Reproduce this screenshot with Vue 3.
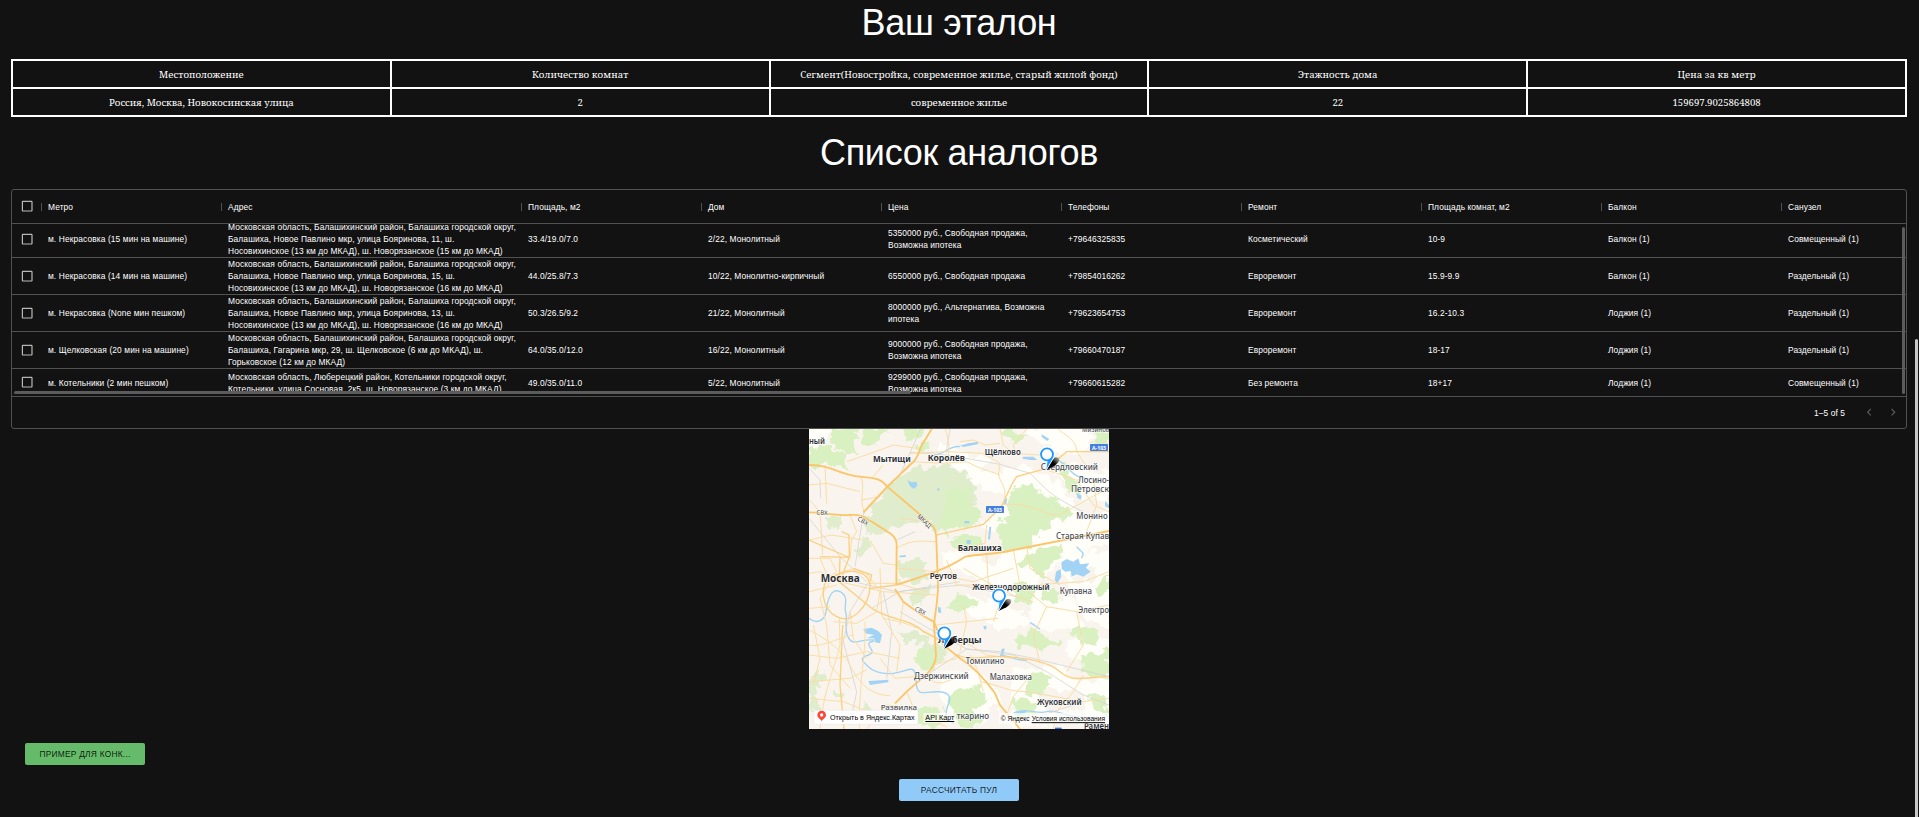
<script setup>
const etalonHead = ['Местоположение', 'Количество комнат', 'Сегмент(Новостройка, современное жилье, старый жилой фонд)', 'Этажность дома', 'Цена за кв метр']
const etalonRow = ['Россия, Москва, Новокосинская улица', '2', 'современное жилье', '22', '159697.9025864808']

const columns = ['Метро', 'Адрес', 'Площадь, м2', 'Дом', 'Цена', 'Телефоны', 'Ремонт', 'Площадь комнат, м2', 'Балкон', 'Санузел']
const rows = [
  ['м. Некрасовка (15 мин на машине)', 'Московская область, Балашихинский район, Балашиха городской округ,\nБалашиха, Новое Павлино мкр, улица Бояринова, 11, ш.\nНосовихинское (13 км до МКАД), ш. Новорязанское (15 км до МКАД)', '33.4/19.0/7.0', '2/22, Монолитный', '5350000 руб., Свободная продажа, Возможна ипотека', '+79646325835', 'Косметический', '10-9', 'Балкон (1)', 'Совмещенный (1)'],
  ['м. Некрасовка (14 мин на машине)', 'Московская область, Балашихинский район, Балашиха городской округ,\nБалашиха, Новое Павлино мкр, улица Бояринова, 15, ш.\nНосовихинское (13 км до МКАД), ш. Новорязанское (16 км до МКАД)', '44.0/25.8/7.3', '10/22, Монолитно-кирпичный', '6550000 руб., Свободная продажа', '+79854016262', 'Евроремонт', '15.9-9.9', 'Балкон (1)', 'Раздельный (1)'],
  ['м. Некрасовка (None мин пешком)', 'Московская область, Балашихинский район, Балашиха городской округ,\nБалашиха, Новое Павлино мкр, улица Бояринова, 13, ш.\nНосовихинское (13 км до МКАД), ш. Новорязанское (16 км до МКАД)', '50.3/26.5/9.2', '21/22, Монолитный', '8000000 руб., Альтернатива, Возможна ипотека', '+79623654753', 'Евроремонт', '16.2-10.3', 'Лоджия (1)', 'Раздельный (1)'],
  ['м. Щелковская (20 мин на машине)', 'Московская область, Балашихинский район, Балашиха городской округ,\nБалашиха, Гагарина мкр, 29, ш. Щелковское (6 км до МКАД), ш.\nГорьковское (12 км до МКАД)', '64.0/35.0/12.0', '16/22, Монолитный', '9000000 руб., Свободная продажа, Возможна ипотека', '+79660470187', 'Евроремонт', '18-17', 'Лоджия (1)', 'Раздельный (1)'],
  ['м. Котельники (2 мин пешком)', 'Московская область, Люберецкий район, Котельники городской округ,\nКотельники, улица Сосновая, 2к5, ш. Новорязанское (3 км до МКАД)', '49.0/35.0/11.0', '5/22, Монолитный', '9299000 руб., Свободная продажа, Возможна ипотека', '+79660615282', 'Без ремонта', '18+17', 'Лоджия (1)', 'Совмещенный (1)'],
]

// Map units are thirds of a pixel; the visible window is 900 x 900 units.
const parks = [
  'M300 150 L350 130 430 125 500 140 520 190 530 230 520 270 470 295 440 320 410 325 385 290 330 290 300 310 215 330 190 325 200 280 230 230 262 190Z',
  'M180 340 L205 335 212 365 200 392 180 397 165 375Z',
  'M290 410 L380 405 384 462 290 468Z',
  'M300 620 L350 612 385 635 370 655 315 655Z',
  'M370 650 L405 650 435 670 432 705 400 712 360 690Z',
  'M27 745 L65 735 70 780 40 810 60 850 27 860Z',
  'M80 285 L110 265 125 300 110 320Z',
  'M345 490 L395 480 385 520 340 545 330 520Z',
  'M100 790 L125 800 120 820 100 815Z',
  'M190 830 L225 850 210 880 195 860Z',
]
const forests = [
  'M100 12 L165 12 170 40 150 55 165 80 140 85 110 60 85 55 95 30Z',
  'M27 70 L60 62 100 72 135 95 150 130 125 125 60 120 27 115Z',
  'M195 12 L260 12 235 50 205 60 185 40Z',
  'M440 195 L500 190 520 240 550 270 540 292 430 325 415 290 440 250Z',
  'M640 190 L690 180 720 205 770 235 815 265 790 280 740 290 735 320 680 330 640 300 620 240Z',
  'M600 290 L650 270 690 330 690 365 620 375 598 330Z',
  'M440 350 L490 325 540 340 540 362 480 365 450 375Z',
  'M690 395 L740 370 785 360 780 385 740 430 720 465 700 430 655 420Z',
  'M650 475 L690 475 710 500 690 540 650 515Z',
  'M450 530 L480 507 530 525 535 545 500 550 445 545Z',
  'M725 485 L765 495 780 530 750 540 725 520Z',
  'M815 620 L840 605 880 625 895 645 850 650Z',
  'M840 690 L885 685 927 675 927 752 850 740Z',
  'M650 640 L700 618 770 655 740 670 660 660Z',
  'M355 675 L400 685 405 730 370 735 345 705Z',
  'M460 800 L530 790 560 825 530 850 525 912 480 890 445 850Z',
  'M330 860 L370 845 410 850 435 885 410 912 370 900Z',
  'M680 760 L720 745 750 770 720 810 680 800Z',
  'M640 835 L690 825 710 870 660 875Z',
  'M880 20 L927 12 927 55 890 50Z',
  'M790 130 L830 165 835 205 800 190Z',
  'M600 20 L640 12 670 35 640 50Z',
  'M320 12 L360 12 365 30 330 40Z',
  'M345 65 L375 50 390 65 365 85Z',
  'M895 480 L927 460 927 500 900 510Z',
  'M860 820 L900 810 927 840 927 870Z',
]
const fields = [
  'M500 140 L600 150 640 130 740 150 860 290 927 240 927 345 800 390 690 480 600 600 580 480 600 400 680 360 600 370 560 300 620 240 600 190 550 190Z',
  'M680 20 L760 12 860 20 870 60 790 80 740 50Z',
  'M430 400 L600 390 650 420 640 500 560 470 500 440Z',
  'M590 500 L680 480 820 540 840 600 740 610 690 580 640 610 590 600Z',
  'M500 510 L580 540 580 590 520 570Z',
  'M430 745 L540 750 600 830 560 860 520 900 440 870Z',
  'M410 180 L470 190 460 235 400 220Z',
  'M27 12 L80 12 70 45 27 65Z',
  'M780 400 L927 380 927 600 860 580Z',
  'M640 740 L780 730 840 780 927 760 927 880 640 900Z',
  'M420 60 L560 110 530 135 430 110Z',
  'M760 120 L927 150 927 210 860 220 800 180Z',
  'M800 650 L927 640 927 690 830 700Z',
]
const towns = [
  'M820 225 L900 215 900 260 840 270Z',
  'M810 440 L890 425 880 470 820 475Z',
  'M620 520 L690 520 685 570 630 560Z',
  'M700 800 L830 790 860 850 760 860Z',
  'M520 330 L600 320 600 420 540 410Z',
  'M690 80 L790 90 800 125 700 130Z',
]
const water = [
  'M322 165 L335 172 350 170 352 182 342 192 330 184Z',
  'M784 412 L800 402 820 410 835 400 840 418 868 415 858 428 872 440 850 455 830 448 815 455 812 438 796 440 785 432Z',
  'M768 440 L782 432 784 455 772 475 764 465Z',
  'M190 612 L215 608 235 618 246 630 240 655 225 652 222 640 200 640 222 630 195 625Z',
  'M480 62 L505 55 535 50 533 58 490 66Z',
  'M668 95 L700 95 712 105 690 105 668 101Z',
  'M725 28 L748 42 742 48 725 36Z',
  'M612 222 L622 220 618 240 609 238Z',
  'M830 205 L845 212 842 224 832 218Z',
  'M915 228 L927 240 927 250 915 244Z',
  'M500 345 L512 345 512 357 500 356Z',
  'M568 305 L574 305 570 345 564 342Z',
  'M414 545 L422 548 424 565 414 562Z',
  'M605 672 L614 670 610 692 600 698Z',
  'M205 768 L265 764 265 772 210 780Z',
  'M298 392 L316 390 318 396 298 397Z',
  'M550 602 L560 604 558 614 552 612Z',
  'M493 288 L508 288 508 295 493 295Z',
  'M412 190 l6 0 0 7 -6 0Z',
  'M650 862 L680 855 675 866 652 872Z',
]
const rivers = [
  'M27 580 C50 600 75 585 78 560 S90 485 120 500 130 545 137 560 130 610 145 638 180 640 222 645',
  'M222 648 C180 655 240 680 205 690 S195 715 205 725 S240 750 280 745 S340 720 345 745 S345 805 370 803 S430 795 445 810 S430 850 440 880 L460 895',
  'M400 90 C440 88 445 60 480 65',
  'M745 78 C760 100 790 110 810 135 S850 160 890 165',
  'M600 690 C640 695 650 710 680 705',
  'M640 865 C680 845 710 870 740 860 S800 880 850 875',
  'M830 365 L850 385 L845 400',
  'M690 592 L720 612',
]
const mainRoads = [
  'M27 120 C90 118 120 150 180 155 S245 165 262 185 L385 290 C405 308 408 315 409 345 L414 480 C414 530 404 570 402 600 L408 690 C408 715 395 735 375 752 L320 800 285 835',
  'M27 262 C60 262 110 272 150 270 S195 280 215 290 L270 325 C285 335 290 345 290 360 L289 480',
  'M190 262 L262 185 330 120 C360 100 355 70 372 50 L395 12',
  'M289 480 C340 462 430 440 495 395 C550 385 590 388 640 375 L927 318',
  'M285 492 L310 530 C350 560 380 580 402 590',
  'M402 590 L430 660 480 700 C520 725 560 770 585 805 L600 840 660 912',
]
const midRoads = [
  'M410 330 C450 320 500 310 550 298 L600 250 C620 220 625 190 650 155 L740 130 800 80 927 80',
  'M27 345 L130 390 147 397', 'M147 397 L60 395', 'M132 912 L120 780 128 600',
  'M160 430 L215 450 210 470', 'M118 470 L120 395', 'M125 320 L147 330 148 395 120 470',
  'M470 690 C520 710 570 690 620 695 S740 705 780 740 S860 755 927 755',
  'M215 550 C280 590 330 580 370 620 L430 650', 'M118 470 L215 550', 'M90 462 C60 470 60 550 110 575 S205 540 210 490 150 420 90 462Z',
  'M210 490 L289 480',
]
const minorRoads = [
  'M75 120 L80 235', 'M27 225 C50 245 60 260 62 290 L68 390', 'M150 270 L170 320 155 345 150 400',
  'M180 155 C200 180 175 210 192 262', 'M27 400 L90 400 110 440 80 460', 'M27 345 L95 330 190 345', 'M210 345 L250 415 290 420',
  'M105 450 L160 430 200 445 240 500 230 560 170 595 100 590', 'M27 500 L110 480', 'M27 550 L90 545', 'M60 912 C70 800 100 740 120 660 L118 580',
  'M178 912 C175 780 200 680 195 590', 'M27 615 C80 640 130 680 150 720 S200 810 270 812', 'M118 470 L250 500 408 510',
  'M240 430 L245 570 300 660 290 740', 'M27 690 L110 700 200 680 300 700', 'M27 660 C60 670 110 640 160 630', 'M240 700 L285 760 375 752',
  'M289 370 C340 340 370 350 408 350', 'M290 430 L410 440', 'M200 475 L290 475 380 500', 'M250 580 C300 590 350 600 400 635',
  'M185 225 L240 215 250 195', 'M265 185 L335 110 430 115 500 110 530 125 600 150', 'M330 85 L440 80 550 85 600 115 595 150',
  'M435 12 C450 50 450 85 440 105', 'M480 50 L520 45 555 60 600 55', 'M600 12 L610 60 640 85 720 90', 'M680 12 L640 60 645 80',
  'M595 150 C605 180 625 190 610 240', 'M610 238 C650 235 700 245 740 265 S820 240 927 190', 'M740 135 L830 165 880 240 927 260',
  'M775 12 C790 30 830 40 830 80 L870 140', 'M880 160 L890 240 860 320', 'M560 300 L555 355 500 370', 'M560 390 L565 475 600 530 580 590',
  'M440 405 L470 480 580 480', 'M420 450 L520 470 640 430', 'M640 375 L660 480 740 545 830 560 927 540', 'M490 430 C560 470 620 510 700 530',
  'M410 600 L500 590 595 580', 'M420 640 L500 655 560 690 640 700', 'M480 680 L500 590 490 540',
  'M510 690 C540 740 540 770 550 800', 'M540 770 C600 780 620 800 680 800 L850 830 927 820', 'M620 870 L640 815 700 740', 'M760 912 L770 860 820 800 850 750',
  'M385 750 C400 790 440 770 475 755', 'M402 720 L470 700', 'M320 800 L350 870 440 905', 'M200 912 L260 840 340 850', 'M27 820 L130 830 230 870',
  'M740 545 L700 630 720 715', 'M830 560 L850 660 800 740', 'M700 480 L850 470 927 440', 'M680 360 L690 430 780 480', 'M27 180 L80 175 180 200',
  'M27 445 L60 440 130 480', 'M300 280 L385 290', 'M310 530 L300 600', 'M250 120 L215 160', 'M140 110 L240 75 280 60 L350 70',
  'M60 400 L90 470 60 520 80 600', 'M40 600 L60 700 40 780', 'M80 600 L90 720 150 790', 'M27 770 L150 760 200 735', 'M150 560 L160 640 200 700',
]
const rails = [
  'M27 280 L120 395 200 470', 'M190 265 L300 150 362 12', 'M165 425 L180 330 192 262', 'M330 82 L440 90 600 118 690 145 C730 180 740 210 850 260',
  'M160 470 L290 500 480 480 650 515', 'M300 560 L420 630 500 672 640 690 740 740 850 810 927 840', 'M200 480 L150 560 130 650', 'M290 345 L345 320',
  'M250 500 L275 620 260 760', 'M450 12 L438 85', 'M500 672 L600 680 700 700 927 755', 'M27 130 L60 165 62 220', 'M700 880 L820 840',
  'M215 550 L300 500 480 470', 'M130 650 L170 800 150 900', 'M380 750 L500 672',
]

// text, x, baseline, size, drawn width, weight
const labels = [
  ['ный', 27, 58, 24, 48, 600],
  ['Мытищи', 219, 110, 26, 113, 700],
  ['Королёв', 383, 108, 26, 112, 700],
  ['Щёлково', 554, 90, 25, 108, 600],
  ['Мизинов', 846, 22, 21, 82, 500],
  ['Свердловский', 722, 135, 24, 172, 500],
  ['Лосино-', 835, 173, 24, 92, 500],
  ['Петровск', 813, 201, 24, 114, 500],
  ['Монино', 829, 281, 24, 94, 500],
  ['Старая Купав', 768, 342, 24, 159, 500],
  ['Балашиха', 473, 377, 26, 132, 700],
  ['Москва', 62, 472, 31, 117, 700],
  ['Реутов', 389, 463, 25, 82, 600],
  ['Железнодорожный', 517, 495, 25, 232, 600],
  ['Купавна', 779, 507, 24, 97, 500],
  ['Электро', 835, 563, 24, 92, 500],
  ['Люберцы', 414, 655, 26, 131, 700],
  ['Томилино', 497, 717, 24, 116, 500],
  ['Дзержинский', 342, 762, 24, 164, 500],
  ['Малаховка', 569, 764, 24, 127, 500],
  ['Развилка', 242, 854, 23, 109, 500],
  ['ткарино', 470, 881, 24, 97, 500],
  ['Жуковский', 711, 840, 25, 134, 600],
  ['Рамен', 852, 911, 25, 75, 600],
]
const roadNames = [
  ['СВХ', 49, 269, 3, 34],
  ['СВХ', 171, 285, 30, 34],
  ['МКАД', 350, 276, 43, 50],
  ['СВХ', 343, 556, 27, 34],
]
const shields = [[870, 57], [558, 243]]
const pins = [[741, 88], [597, 512], [433, 625]]
</script>

<template>
  <div class="page">
    <h2 class="title">Ваш эталон</h2>

    <table class="etalon">
      <tbody>
        <tr class="names"><td v-for="h in etalonHead" :key="h">{{ h }}</td></tr>
        <tr><td v-for="c in etalonRow" :key="c">{{ c }}</td></tr>
      </tbody>
    </table>

    <h2 class="title second">Список аналогов</h2>

    <div class="grid">
      <div class="line head">
        <div class="check">
          <svg viewBox="0 0 24 24"><path d="M19 5v14H5V5h14m0-2H5c-1.1 0-2 .9-2 2v14c0 1.1.9 2 2 2h14c1.1 0 2-.9 2-2V5c0-1.1-.9-2-2-2z" /></svg>
        </div>
        <div v-for="c in columns" :key="c" class="cell"><i class="sep"></i>{{ c }}</div>
      </div>
      <div class="body">
        <div v-for="(r, i) in rows" :key="i" class="line row">
          <div class="check">
            <svg viewBox="0 0 24 24"><path d="M19 5v14H5V5h14m0-2H5c-1.1 0-2 .9-2 2v14c0 1.1.9 2 2 2h14c1.1 0 2-.9 2-2V5c0-1.1-.9-2-2-2z" /></svg>
          </div>
          <div v-for="(c, j) in r" :key="j" class="cell"><span>{{ c }}</span></div>
        </div>
        <div class="bar horizontal"></div>
        <div class="bar vertical"></div>
      </div>
      <div class="foot">
        <span class="count">1–5 of 5</span>
        <svg viewBox="0 0 24 24"><path d="M15.41 7.41 14 6l-6 6 6 6 1.41-1.41L10.83 12z" /></svg>
        <svg viewBox="0 0 24 24"><path d="M10 6 8.59 7.41 13.17 12l-4.58 4.59L10 18l6-6z" /></svg>
      </div>
    </div>

    <svg class="map" viewBox="27 12 900 900">
      <defs>
        <linearGradient id="shade" x1="0" y1="1" x2="1" y2="0">
          <stop offset="0.55" stop-color="#000" />
          <stop offset="1" stop-color="#000" stop-opacity="0.1" />
        </linearGradient>
        <filter id="ragged" filterUnits="userSpaceOnUse" x="0" y="0" width="960" height="960">
          <feTurbulence type="fractalNoise" baseFrequency="0.03" numOctaves="3" seed="4" />
          <feDisplacementMap in="SourceGraphic" scale="50" xChannelSelector="R" yChannelSelector="G" />
        </filter>
      </defs>
      <rect x="27" y="12" width="900" height="900" fill="#f9f5ee" />
      <g filter="url(#ragged)">
        <path v-for="d in fields" :key="d" :d="d" class="field" />
        <path v-for="d in towns" :key="d" :d="d" class="town" />
        <path v-for="d in parks" :key="d" :d="d" class="park" />
        <path v-for="d in forests" :key="d" :d="d" class="forest" />
      </g>
      <path v-for="d in rivers" :key="d" :d="d" class="river" />
      <path v-for="d in water" :key="d" :d="d" class="water" />
      <path v-for="d in rails" :key="d" :d="d" class="rail" />
      <path v-for="d in minorRoads" :key="d" :d="d" class="minor" />
      <path v-for="d in midRoads" :key="d" :d="d" class="mid" />
      <path v-for="d in mainRoads" :key="d" :d="d" class="main" />
      <path d="M765 912 V908 H785 V912Z" fill="#2f6fe0" />

      <text
        v-for="(n, i) in roadNames" :key="'n' + i" class="road-name"
        :transform="`translate(${n[1]} ${n[2]}) rotate(${n[3]})`" :textLength="n[4]" lengthAdjust="spacingAndGlyphs"
      >{{ n[0] }}</text>
      <text
        v-for="l in labels" :key="l[0]" class="label" :x="l[1]" :y="l[2]" :font-size="l[3]" :font-weight="l[5]"
        :fill="l[5] > 500 ? '#2d3138' : '#4a4e55'" :textLength="l[4]" lengthAdjust="spacingAndGlyphs"
      >{{ l[0] }}</text>
      <g v-for="s in shields" :key="s[0]">
        <rect :x="s[0]" :y="s[1]" width="54" height="21" rx="2" fill="#4580e0" />
        <text :x="s[0] + 6" :y="s[1] + 17" class="shield" textLength="42" lengthAdjust="spacingAndGlyphs">А-103</text>
      </g>

      <g v-for="p in pins" :key="p[0]" :transform="`translate(${p[0]} ${p[1]})`">
        <path d="M-1 46 L14 18 Q26 4 37 12 Q38 24 22 35Z" fill="url(#shade)" />
        <path d="M-2 44 L2 20 A21 21 0 1 1 17 13Z" fill="#fff" stroke="#fff" stroke-width="5" stroke-linejoin="round" />
        <path d="M-2 45 L2 18 L18 10Z" fill="#1e98ff" />
        <circle r="18" fill="#fff" stroke="#1e98ff" stroke-width="5.500" />
      </g>

      <rect x="42" y="856" width="312" height="42" rx="4" fill="#fff" stroke="#ddd" />
      <path d="M65 889 C63 882 52 880 52 870 A13 13 0 0 1 78 870 C78 880 67 882 65 889Z" fill="#f43" />
      <circle cx="65" cy="870" r="5" fill="#fff" />
      <text x="90" y="885" class="control" textLength="254" lengthAdjust="spacingAndGlyphs">Открыть в Яндекс.Картах</text>
      <rect x="370" y="864" width="98" height="30" fill="#fff" opacity="0.6" />
      <text x="376" y="885" class="control" textLength="87" lengthAdjust="spacingAndGlyphs">API Карт</text>
      <path d="M376 889.500H463" class="underline" />
      <rect x="597" y="864" width="330" height="32" fill="#fff" opacity="0.7" />
      <text x="602" y="888" class="control" textLength="87" lengthAdjust="spacingAndGlyphs">© Яндекс</text>
      <text x="695" y="888" class="control" textLength="220" lengthAdjust="spacingAndGlyphs">Условия использования</text>
      <path d="M695 893H915" class="underline" />
    </svg>

    <button class="btn green"><span>Пример для конк...</span></button>
    <button class="btn blue"><span>Рассчитать пул</span></button>

    <div class="page-scroll"></div>
  </div>
</template>

<style>
body {
  background: #121212;
}
</style>

<style scoped>
.page {
  position: relative;
  box-sizing: border-box;
  height: 817px;
  padding: 1px 12px 0 11px;
  overflow: hidden;
  display: flex;
  flex-direction: column;
  background: #121212;
  color: #fff;
  font-family: "Liberation Sans", Arial, sans-serif;
}
.title {
  margin: 0;
  height: 43px;
  line-height: 43px;
  font-size: 36px;
  font-weight: 300;
  letter-spacing: -0.00833em;
  text-align: center;
}
.title.second {
  margin-top: 14px;
}
.etalon {
  width: 1896px;
  height: 58px;
  margin-top: 15px;
  flex: none;
  table-layout: fixed;
  border-collapse: collapse;
  font-family: "Noto Serif", "Droid Serif", "DejaVu Serif", serif;
  font-size: 9.6px;
  line-height: 14px;
  text-align: center;
}
.etalon td {
  height: 26px;
  box-sizing: border-box;
  padding: 2px 0 0;
  border: 2px solid #fff;
}
.names td {
  letter-spacing: 0.07px;
}
.grid {
  width: 1896px;
  height: 240px;
  margin-top: 15px;
  flex: none;
  box-sizing: border-box;
  border: 1px solid #515151;
  border-radius: 3px;
  display: flex;
  flex-direction: column;
  font-size: 8.4px;
  line-height: 12px;
  letter-spacing: 0.01071em;
}
.line {
  display: grid;
  grid-template-columns: 30px 180px 300px repeat(8, 180px);
  align-items: center;
  box-sizing: border-box;
  border-bottom: 1px solid #515151;
  flex: none;
}
.head {
  height: 34px;
}
.cell {
  position: relative;
  padding: 0 6px;
}
.row .cell:nth-child(3) {
  padding-right: 0;
  letter-spacing: 0.0128em;
  white-space: pre;
}
.row .cell:nth-child(2) {
  letter-spacing: 0.0135em;
}
.sep {
  position: absolute;
  left: -1px;
  top: 2px;
  width: 1px;
  height: 8px;
  background: #515151;
}
.check {
  display: flex;
  justify-content: center;
}
.check svg {
  width: 14.4px;
  height: 14.4px;
  fill: #b8b8b8;
}
.body {
  position: relative;
  height: 172px;
  overflow: hidden;
  display: flex;
  flex-direction: column;
}
.row {
  height: 37px;
}
.row:first-child {
  margin-top: -3px;
}
.row:nth-child(5) {
  height: 27px;
  border-bottom: none;
}
.bar {
  position: absolute;
  background: #5c5c5c;
  border-radius: 2px;
}
.bar.horizontal {
  left: 2px;
  top: 167px;
  width: 897px;
  height: 3px;
}
.bar.vertical {
  right: 1px;
  top: 3px;
  width: 3px;
  height: 167px;
}
.foot {
  flex: 1;
  display: flex;
  align-items: center;
  justify-content: flex-end;
  padding-right: 6px;
  border-top: 1px solid #515151;
}
.foot svg {
  width: 14.4px;
  height: 14.4px;
  margin-left: 9.6px;
  fill: #5a5a5a;
}
.count {
  margin-right: 7px;
}
.map {
  width: 300px;
  height: 300px;
  flex: none;
  margin-left: 798px;
  display: block;
}
.forest {
  fill: #d9f0c0;
  stroke: #d9f0c0;
  stroke-width: 6;
}
.park {
  fill: #dfedcd;
}
.field {
  fill: #fffef9;
  stroke: #fffef9;
  stroke-width: 14;
  stroke-linejoin: round;
}
.town {
  fill: #f8f4ec;
}
.water {
  fill: #a3d3f4;
}
.river {
  fill: none;
  stroke: #a3d3f4;
  stroke-width: 4;
}
.rail {
  fill: none;
  stroke: #d4d4d2;
  stroke-width: 2.4;
}
.minor {
  fill: none;
  stroke: #fbdda6;
  stroke-width: 3;
}
.mid {
  fill: none;
  stroke: #fccf80;
  stroke-width: 4;
}
.main {
  fill: none;
  stroke: #fcc568;
  stroke-width: 5.5;
}
.label {
  font-family: "Noto Sans", sans-serif;
  stroke: #fff;
  stroke-opacity: 0.7;
  stroke-width: 4;
  paint-order: stroke;
}
.road-name {
  font: 19px "Noto Sans", sans-serif;
  fill: #444;
  stroke: #fff;
  stroke-width: 3;
  paint-order: stroke;
}
.shield {
  font: 700 17px "Noto Sans", sans-serif;
  fill: #fff;
}
.control {
  font: 22px "Liberation Sans", Arial, sans-serif;
  fill: #000;
}
.underline {
  stroke: #000;
  stroke-width: 3;
}
.btn {
  width: 120px;
  height: 22px;
  margin: 14px 0 0;
  padding: 0;
  flex: none;
  border: 0;
  border-radius: 2px;
  font-family: inherit;
  font-size: 8.4px;
  line-height: 22px;
  letter-spacing: 0.02857em;
  text-transform: uppercase;
  text-align: center;
  color: rgba(0, 0, 0, 0.87);
}
.green {
  margin-left: 14px;
  background: #66bb6a;
}
.blue {
  margin-left: 888px;
  background: #90caf9;
}
.page-scroll {
  position: absolute;
  left: 1915px;
  top: 339px;
  width: 3px;
  height: 482px;
  border-radius: 2px;
  background: #c9c9c9;
}
</style>
